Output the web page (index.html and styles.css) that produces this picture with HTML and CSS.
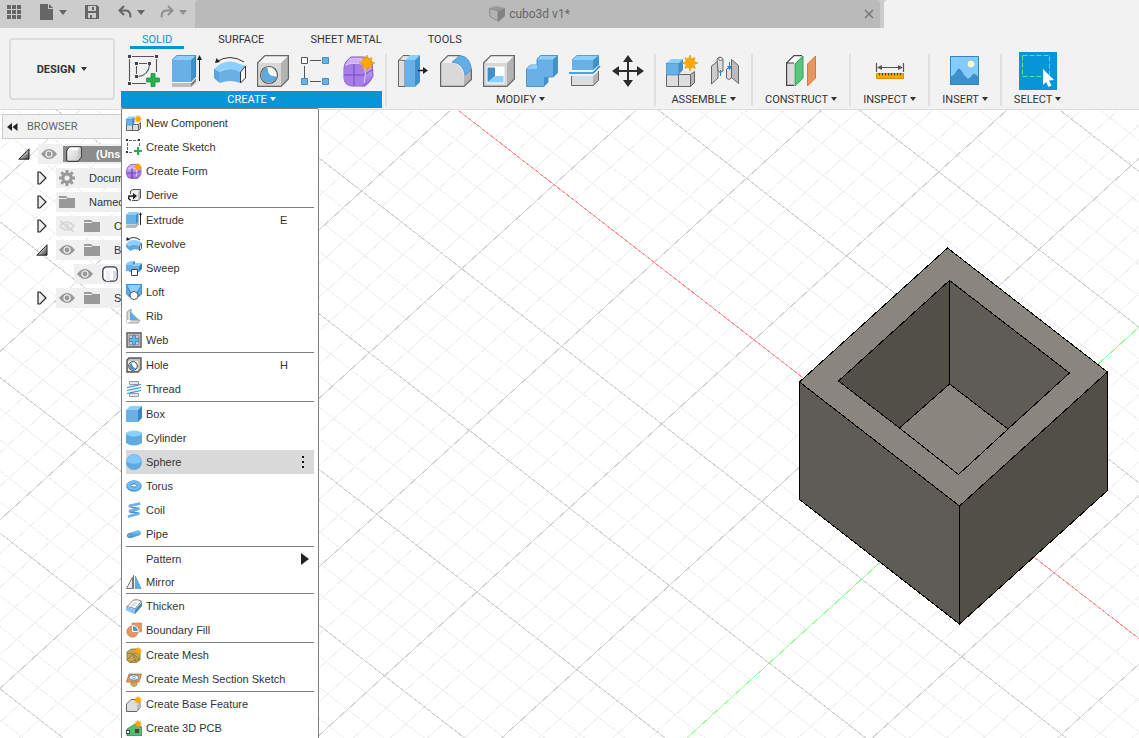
FILE: index.html
```html
<!DOCTYPE html>
<html lang="en">
<head>
<meta charset="utf-8">
<title>cubo3d v1*</title>
<link rel="stylesheet" href="styles.css">
</head>
<body>
<svg class="defs" aria-hidden="true">
  <linearGradient id="g-ball" x1="0" y1="0" x2="0" y2="1"><stop offset="0" stop-color="#d9b8ff"/><stop offset="1" stop-color="#9a6fe0"/></linearGradient>
  <linearGradient id="g-gray" x1="0" y1="0" x2="1" y2="1"><stop offset="0" stop-color="#ffffff"/><stop offset="1" stop-color="#c4c4c4"/></linearGradient>
  <linearGradient id="g-tri" x1="0" y1="0" x2="1" y2="1"><stop offset="0.3" stop-color="#eeeeee"/><stop offset="1" stop-color="#333333"/></linearGradient>
  <linearGradient id="g-pipe" x1="0" y1="0" x2="0" y2="1"><stop offset="0" stop-color="#8cccff"/><stop offset="1" stop-color="#3c8ccb"/></linearGradient>

  <symbol id="i-apps" viewBox="0 0 16 16"><path fill="#666" d="M1 1h4v4H1zM6 1h4v4H6zM11 1h4v4h-4zM1 6h4v4H1zM6 6h4v4H6zM11 6h4v4h-4zM1 11h4v4H1zM6 11h4v4H6zM11 11h4v4h-4z"/></symbol>
  <symbol id="i-file" viewBox="0 0 16 16"><path fill="#666" d="M1 0h8v5h5v11H1zM10 0l4 4h-4z"/></symbol>
  <symbol id="i-save" viewBox="0 0 16 16"><path fill="#666" fill-rule="evenodd" d="M1 1h12l2 2v12H1zM4 2v5h8V2zM4 9v5h8V9zM8 3h2v3H8zM6 11h2v3H6z"/></symbol>
  <symbol id="i-undo" viewBox="0 0 16 16"><path fill="none" stroke="#666" stroke-width="2" d="M7 2L2.500 6.500 7 11M3 6.500h6q4.500 0 4.500 7"/></symbol>
  <symbol id="i-redo" viewBox="0 0 16 16"><path fill="none" stroke="#8f8f8f" stroke-width="2" d="M9 2l4.500 4.500L9 11M13 6.500H7q-4.500 0-4.500 7"/></symbol>
  <symbol id="i-doc" viewBox="0 0 16 16"><path fill="#9a9a9a" d="M0 2l7-2 9 2-7 3z"/><path fill="#b4b4b4" stroke="#8c8c8c" d="M.5 2.500L9 5v10L1 10.500z"/><path fill="#828282" d="M9 5l7-3v8l-7 6z"/></symbol>
  <symbol id="i-x" viewBox="0 0 10 10"><path fill="none" stroke="#777" stroke-width="1.500" d="M1 1l8 8M9 1L1 9"/></symbol>

  <symbol id="i-star" viewBox="0 0 16 16"><path fill="#ffa800" stroke="#e89400" stroke-width=".6" d="M8 0l1.500 4L13 2.500 12 6.500l4 1.500-4 1.500 1.200 4L9.500 12 8 16l-1.500-4L3 13.500l1.200-4L0 8l4.200-1.500L3 2.500 6.500 4z"/></symbol>

  <symbol id="i-sketch" viewBox="0 0 32 32"><path stroke="#555" fill="none" stroke-width="1.100" d="M4 1.500h22M1.500 4v22M28.500 4v13M4 28.500h14M11 8.500h8M8.500 11v8M21.500 10q-1 10-11 11.500"/><path fill="#444" d="M0 0h3v3H0zM27 0h3v3h-3zM0 27h3v3H0zM7 7h3v3H7zM20 7h3v3h-3zM7 20h3v3H7z"/><path fill="#26b34b" stroke="#168c36" stroke-width=".7" d="M23 18.500h4V23h4.500v4H27v4.500h-4V27h-4.500v-4H23z"/></symbol>
  <symbol id="i-sketch-sm" viewBox="0 0 16 16"><path stroke="#666" fill="none" stroke-dasharray="3 1" d="M3 1.500h10M1.500 4v8M13.500 4v4M3 13.500h4"/><path fill="#333" d="M0 0h2v2H0zM12 0h2v2h-2zM0 12h2v2H0z"/><path fill="#20b14a" d="M11 8h2v3h3v2h-3v3h-2v-3H8v-2h3z"/></symbol>
  <symbol id="i-extrude" viewBox="0 0 32 32"><path fill="#bdbdbd" d="M1 28h19v4H1z"/><path fill="#858585" d="M20 28l5-5v4l-5 5z"/><path fill="#fff" d="M1 27h19l5-5v1l-5 5H1z"/><path fill="#69b0e6" d="M1 5h19v22H1z"/><path fill="#8bd0ff" d="M1 5l5-5h19l-5 5z"/><path fill="#438fca" d="M20 5l5-5v22l-5 5z"/><path fill="none" stroke="#2d7ab5" stroke-width=".7" d="M1 5l5-4.600h18.600V22"/><path stroke="#222" d="M28.500 4v22"/><path fill="#222" d="M28.500 0l2.500 5h-5z"/></symbol>
  <symbol id="i-extrude-sm" viewBox="0 0 16 16"><path fill="#bbb" stroke="#999" stroke-width=".6" d="M.5 13.500h9l3-3v2l-3 3h-9z"/><path fill="#69b0e6" d="M0 2h10v10.500H0z"/><path fill="#8bd0ff" d="M0 3l3-3h9.500L10 3z"/><path fill="#438fca" d="M10 3l2.500-3v9.500L10 12.500z"/><path stroke="#222" d="M14.500 2v11"/><path fill="#222" d="M14.500 0l1.500 3h-3z"/></symbol>
  <symbol id="i-revolve" viewBox="0 0 32 32"><path fill="none" stroke="#333" d="M2 7Q16-2 30 7"/><path fill="#222" d="M1 8l1.500-5L6 7z"/><path fill="#8bd0ff" d="M0 14l6-5q10-5 20 0l6 2-6 6q-11-6-20-1l-1 4z"/><path fill="#69b0e6" d="M0 14l5 3q11-6 21 0v11q-10-4-20 0l-6-5z"/><path fill="#438fca" d="M5 17v11l-5-5v-9z" opacity=".35"/><path fill="#f4f4f4" stroke="#333" d="M26.500 17l5-6v12l-5 5z"/></symbol>
  <symbol id="i-revolve-sm" viewBox="0 0 16 16"><path fill="none" stroke="#333" d="M1 4q7-5 13 0"/><path fill="#222" d="M0 4.500L1 1l3 3z"/><path fill="#8bd0ff" d="M0 8l3-3q5-2 10 0l3 2-3 3q-5-3-10 0z"/><path fill="#60aae2" d="M0 8l3 2q5-3 10 0v4q-5-2-9 1l-4-4z"/><path fill="#ddd" stroke="#444" stroke-width=".8" d="M13.500 10L15.500 7.500v5l-2 2z"/></symbol>
  <symbol id="i-hole" viewBox="0 0 32 32"><path fill="#f4f4f4" d="M.5 8L8 .500h23.500L24 8z"/><path fill="#b3b3b3" d="M24 8l7.500-7.500V24L24 31.500z"/><path fill="#d7d7d7" d="M.5 8H24v23.500H.5z"/><path fill="none" stroke="#666" stroke-width="1.200" d="M.5 8L8 .600h23.400V24L24 31.400H.6z"/><circle cx="12" cy="20" r="8.500" fill="#f7f7f7" stroke="#555" stroke-width="1.200"/><path fill="#60aae2" stroke="#347fb9" stroke-width=".6" d="M10 13a7.200 7.200 0 1 0 9 9q-9 0-9-9z"/></symbol>
  <symbol id="i-rect" viewBox="0 0 32 32"><path stroke="#555" d="M10 5.500h11M4.500 11v12M10 26.500h11"/><path fill="#fff" stroke="#555" d="M1.500 2.500h6v6h-6z"/><path fill="#69b0e6" stroke="#438fca" d="M22.500 2.500h6v6h-6zM1.500 23.500h6v6h-6zM22.500 23.500h6v6h-6z"/></symbol>
  <symbol id="i-form" viewBox="0 0 32 32"><path fill="url(#g-ball)" stroke="#8055c4" d="M1 14q0-7 7-12h12q6 0 9 5l1 14q-3 7-8 10H9q-8-1-8-8z"/><path fill="#a87de8" d="M1 14q1-4 6-5h11q4 1 4 5v12q-1 4-4 5H8q-7-2-7-7z"/><path fill="none" stroke="#724ab3" d="M1 20h20l8-5M11 9v22"/><path fill="none" stroke="#e2ccff" d="M3 10q5-3 16-1l5-3M21 10q3 8 0 18"/><use href="#i-star" x="16" y="0" width="16" height="16"/></symbol>
  <symbol id="i-form-sm" viewBox="0 0 16 16"><path fill="url(#g-ball)" stroke="#8055c4" stroke-width=".8" d="M.5 8q0-4 4-6.500h7q3 1 3.500 4v5q-1 4-4 5H5Q1 15 .5 11z"/><path fill="none" stroke="#6b3fb0" stroke-width="1.200" d="M1 10h10l3-2M6 5v10"/><path fill="none" stroke="#e2ccff" d="M2 6q4-2 8-.5 2 4 0 8"/><use href="#i-star" x="8" y="0" width="8" height="8"/></symbol>

  <symbol id="i-press" viewBox="0 0 32 32"><path fill="#eee" d="M1 5l5-4.500h9L10 5z"/><path fill="#ddd" stroke="#666" d="M1.500 5.500L6 .500h8M1.500 5v26.500H8V5.500z"/><path fill="#69b0e6" d="M8 5h10v27H8z"/><path fill="#8bd0ff" d="M8 5l5-5h10l-5 5z"/><path fill="#438fca" d="M18 5l5-5v27l-5 5z"/><path stroke="#222" stroke-width="1.500" d="M21 15.500h6"/><path fill="#222" d="M26 12l5 3.500-5 3.500z"/></symbol>
  <symbol id="i-fillet" viewBox="0 0 32 32"><path fill="#f2f2f2" d="M.5 8L8 .500h12L13 8z"/><path fill="#d9d9d9" d="M.5 8H13q11 3 11 16v7.500H.5z"/><path fill="#b5b5b5" d="M24 20l7.500-7v11L24 31.500z"/><path fill="none" stroke="#666" stroke-width="1.200" d="M20 .600H8L.6 8v23.400H24l7.400-7V14"/><path fill="#64ade5" stroke="#3c87c2" stroke-width=".7" d="M12 7l8-6.500q10 1 11.500 14L25 20Q23 8 12 7z"/></symbol>
  <symbol id="i-shell" viewBox="0 0 32 32"><path fill="#f4f4f4" d="M.5 8L8 .500h23.500L24 8z"/><path fill="#b3b3b3" d="M24 8l7.500-7.500V24L24 31.500z"/><path fill="#d7d7d7" d="M.5 8H24v23.500H.5z"/><path fill="none" stroke="#666" stroke-width="1.200" d="M.5 8L8 .600h23.400V24L24 31.400H.6z"/><path fill="#f7f7f7" d="M4 12h17v16H4z"/><path fill="#438fca" d="M4 12h8v9l-8 7z"/><path fill="#8bd0ff" d="M4 28l8-7h9v7z"/><path fill="#fff" d="M12 12h9v9h-9z"/><path fill="none" stroke="#fff" d="M4 12h17v16H4z"/></symbol>
  <symbol id="i-combine" viewBox="0 0 32 32"><path fill="#69b0e6" stroke="#3983bd" stroke-width=".8" d="M.5 14l4-4H11V4L14.500.500h17V18L27 22h-5v5l-4 4.500H.5z"/><path fill="#8bd0ff" d="M1 14l4-4h6v4zM11 4.500L14.500 1H31l-4 3.500z"/><path fill="#438fca" d="M27 4.500L31 1v17l-4 4zM18 22h4v5l-4 4z"/></symbol>
  <symbol id="i-split" viewBox="0 0 32 32"><path fill="#69b0e6" d="M3 5h21v10H3z"/><path fill="#8bd0ff" d="M3 5l5-5h22l-6 5z"/><path fill="#438fca" d="M24 5l6-5v10l-6 5z"/><path fill="none" stroke="#3983bd" stroke-width=".7" d="M3 5l5-4.600h21.600"/><path fill="none" stroke="#1789db" stroke-width="1.500" d="M0 18h24l7-7"/><path fill="#ddd" d="M3 21h21v10H3z"/><path fill="#b5b5b5" d="M24 21l6-5v9l-6 6z"/><path fill="none" stroke="#666" d="M2.500 21v9.500H24l5.500-5V16"/></symbol>
  <symbol id="i-move" viewBox="0 0 32 32"><path fill="#2c2c2c" d="M16 0l5 7h-4v8h8v-4l7 5-7 5v-4h-8v8h4l-5 7-5-7h4v-8H7v4l-7-5 7-5v4h8V7h-4z"/></symbol>
  <symbol id="i-component" viewBox="0 0 32 32"><path fill="#e9e9e9" d="M1 20l4-4h23l-4 4z"/><path fill="#ddd" stroke="#666" d="M.5 19.500h12v12H.5zM12.500 19.500h12v12h-12z"/><path fill="#b3b3b3" stroke="#666" d="M24.500 19.500l4-3v11l-4 4z"/><path fill="#69b0e6" stroke="#3c87c2" stroke-width=".7" d="M.5 8h12v12H.5z"/><path fill="#8bd0ff" d="M1 8l4-4h12l-4 4z"/><path fill="#438fca" d="M13 8l4-4v11l-4 4z"/><use href="#i-star" x="16" y="0" width="16" height="16"/></symbol>
  <symbol id="i-component-sm" viewBox="0 0 16 16"><path fill="#ddd" stroke="#666" d="M.5 9.500h6v6h-6zM6.500 9.500h6v6h-6z"/><path fill="#bbb" stroke="#666" d="M12.500 9.500l2-2v6l-2 2z"/><path fill="#69b0e6" stroke="#3c87c2" stroke-width=".7" d="M.5 4h6v6h-6z"/><path fill="#8bd0ff" d="M.5 4l2-2.500h6L6.500 4z"/><path fill="#3c87c2" d="M6.500 4l2-2.500V8l-2 2z"/><use href="#i-star" x="8" y="0" width="8" height="8"/></symbol>
  <symbol id="i-joint" viewBox="0 0 32 32"><path fill="#ccc" stroke="#666" d="M2.500 11L9 6v17l-6.500 6z"/><path fill="#ddd" stroke="#666" d="M8 4q3-4 6 0v12q-3 3-5 0z"/><ellipse cx="11.500" cy="4" rx="2" ry="1.500" fill="#fff" stroke="#777"/><path fill="#bbb" stroke="#666" d="M22.500 4.500l7 6v18l-7-6z"/><path fill="#ddd" stroke="#666" d="M17.500 14q3-3 5 0v9q-3 3-5 0z"/><path stroke="#1789db" d="M11.500 15v6M20.500 7v7"/><path fill="#1789db" d="M18 11h5l-2.500 4z"/></symbol>
  <symbol id="i-plane" viewBox="0 0 32 32"><path fill="#fff" d="M1 8l8-7.500h7L10 8z"/><path fill="#dcdcdc" d="M1 8h8v22H1z"/><path fill="none" stroke="#444" stroke-width="1.200" d="M17 .600H9L1.600 8v22.400H9M1 8h8"/><path fill="#5dc47f" stroke="#2ea55a" d="M10 9l8-8v22l-8 8z"/><path fill="#e8965f" stroke="#cf7a40" d="M22.500 9l8-8v22l-8 8z"/></symbol>
  <symbol id="i-ruler" viewBox="0 0 32 32"><path stroke="#555" stroke-width="1.200" d="M2.500 8v9M29.500 8v9M4 12.500h24"/><path fill="#555" d="M3 12.500L8 10v5zM29 12.500L24 10v5z"/><path fill="#ffa800" stroke="#d98c00" d="M2.500 18.500h27v5h-27z"/><path stroke="#444" d="M5.500 18v2.500M8.500 18v2.500M11.500 18v2.500M14.500 18v2.500M17.500 18v2.500M20.500 18v2.500M23.500 18v2.500M26.500 18v2.500"/></symbol>
  <symbol id="i-image" viewBox="0 0 32 32"><path fill="#82ccff" d="M1 1h29v29H1z"/><circle cx="22" cy="9" r="3.300" fill="#fffbc7"/><path fill="#3e8fca" d="M1 22q5-2 7-7 2-3 4 0 3 6 7 9 3-2 5-5 2-1 6 4v7H1z"/><path fill="none" stroke="#3484bf" d="M1.500 1.500h28v28h-28z"/></symbol>
  <symbol id="i-select" viewBox="0 0 38 38"><path fill="none" stroke="#5fe08a" stroke-dasharray="5 2" d="M3.500 3.500h27v21h-27z"/><path fill="#fff" d="M24 17l11 11-5 .500 2.500 5-3 1.500-2.500-5-3 3z"/></symbol>

  <symbol id="i-derive" viewBox="0 0 16 16"><path fill="#eee" stroke="#555" d="M4.500 7V4L7 2.500h7.500V11L12 13.500H6"/><path fill="#bbb" d="M12 5l2-2v8l-2 2z"/><path fill="none" stroke="#222" stroke-width="1.600" d="M5 13q-3 0-2-4h5"/><path fill="#222" d="M7 6l4 3-4 3.500z"/></symbol>
  <symbol id="i-sweep" viewBox="0 0 16 16"><path fill="#69b0e6" d="M0 5h6l2 1h5v6H3v-1H0z"/><path fill="#8bd0ff" d="M0 5q0-3 5-4h4v2h7l-3 3H8Q7 4 5 5z"/><path fill="#3983bd" d="M13 6l3-3v6l-3 3zM6 4l3-3v2L7 5z"/><path fill="#fff" stroke="#444" d="M5.500 9.500h6v6h-6z"/></symbol>
  <symbol id="i-loft" viewBox="0 0 16 16"><path fill="#438fca" d="M0 0h16v10l-3 3H3L0 10z"/><path fill="#8bd0ff" d="M1 1h14l-4 7H5z"/><path fill="#60aae2" d="M0 2l5 8-4 1zM16 2l-5 8 4 1z"/><circle cx="8" cy="11.500" r="4" fill="#fff" stroke="#555"/></symbol>
  <symbol id="i-rib" viewBox="0 0 16 16"><path fill="#ddd" stroke="#888" stroke-width=".8" d="M1 4l4-3v11h9l-2 3H1z"/><path fill="#60aae2" d="M4 3l9 9H4z"/><path fill="#fff" d="M1 12h4l-3 3H1z"/></symbol>
  <symbol id="i-web" viewBox="0 0 16 16"><path fill="#e4e4e4" stroke="#555" stroke-width="1.400" d="M1 1h14v14H1z"/><path fill="#ccc" stroke="#666" stroke-width=".8" d="M3 3h10v10H3z"/><path fill="#438fca" d="M6 3h4v3h3v4h-3v3H6v-3H3V6h3z"/><path fill="#69b4ec" d="M7 4h2v3h3v2H9v3H7V9H4V7h3z"/></symbol>
  <symbol id="i-hole-sm" viewBox="0 0 16 16"><path fill="#c4c4c4" stroke="#555" stroke-width="1.400" d="M1 3l2-2h12v11l-3 3H1z"/><path fill="#e5e5e5" d="M2 4h10v10H2z"/><circle cx="7" cy="9" r="4.300" fill="#fff" stroke="#444"/><path fill="#438fca" d="M6 6a3.500 3.500 0 1 0 4 5q-4 0-4-5z"/></symbol>
  <symbol id="i-thread" viewBox="0 0 16 16"><path fill="#e8e8e8" stroke="#999" d="M3.500.500h9v3h-9zM3.500 12.500h9v3h-9z"/><path fill="#eee" d="M4 4h8v8H4z"/><path stroke="#2291df" stroke-width="1.200" d="M1 6.500l14-3M1 9.500l14-3M1 12.500l14-3"/></symbol>
  <symbol id="i-box" viewBox="0 0 16 16"><path fill="#69b0e6" d="M0 4h12v12H0z"/><path fill="#8bd0ff" d="M0 4l4-4h12l-4 4z"/><path fill="#3c87c2" d="M12 4l4-4v12l-4 4z"/></symbol>
  <symbol id="i-cylinder" viewBox="0 0 16 16"><path fill="#60aae2" d="M0 3v10q8 5 16 0V3z"/><ellipse cx="8" cy="3.500" rx="8" ry="3" fill="#8bd0ff"/></symbol>
  <symbol id="i-sphere" viewBox="0 0 16 16"><circle cx="8" cy="8" r="7.800" fill="#82c8fb"/><path fill="#60aae2" d="M.2 8q8 3.500 15.600 0A7.800 7.800 0 0 1 .2 8z"/><circle cx="8" cy="8" r="7.500" fill="none" stroke="#60aae2" stroke-width=".6"/></symbol>
  <symbol id="i-torus" viewBox="0 0 16 16"><ellipse cx="8" cy="8" rx="7.800" ry="5.700" fill="#4795d0"/><ellipse cx="8" cy="7.500" rx="7" ry="4.800" fill="#72bbf0"/><ellipse cx="8" cy="7.500" rx="3" ry="1.600" fill="#fff" stroke="#3c87c2"/></symbol>
  <symbol id="i-coil" viewBox="0 0 16 16"><path fill="none" stroke="#438fca" stroke-width="2" stroke-linejoin="bevel" d="M14 1.500L3 4l10 3L3 9.500l10 2L2 14.500"/><path stroke="#69b4ec" stroke-width="2.600" d="M14 1.500L3 4M13.500 6.500L3 9M13.500 11.500L2 14.500"/></symbol>
  <symbol id="i-pipe" viewBox="0 0 16 16"><path fill="url(#g-pipe)" d="M3 7l9-3q3 0 3 3 0 2-2 2.500L5 12q-4 0-4-2.500Q1 8 3 7z"/><ellipse cx="3.500" cy="9.500" rx="2" ry="1.800" fill="#69b0e6" stroke="#3779aa" stroke-width=".7"/></symbol>
  <symbol id="i-mirror" viewBox="0 0 16 16"><path fill="#eee" stroke="#777" d="M6.500 3v11.500h-6z"/><path fill="#60aae2" stroke="#3c87c2" stroke-width=".6" d="M9.300 2v12.600H15z"/><path stroke="#777" d="M7.500 1v14"/></symbol>
  <symbol id="i-thicken" viewBox="0 0 16 16"><path fill="#3c87c2" d="M0 9l9 3 7-8v4l-7 8-9-4z"/><path fill="#82c8fb" d="M0 9l9 3v4l-9-4z"/><path fill="#fafafa" stroke="#666" stroke-width=".8" d="M1 8.500L7.500 2q4-1 8 1L9 11q-4-2-8-2.500z"/><path fill="#ddd" d="M4 8l4-4 4 .500-4 4z"/></symbol>
  <symbol id="i-boundary" viewBox="0 0 16 16"><path fill="#e8965f" stroke="#c57847" stroke-width=".6" d="M6 1h9.500v9H12V4.500H6z"/><circle cx="6.500" cy="9.500" r="5.500" fill="#e8965f" stroke="#d2824e"/><path fill="#4c9cdb" stroke="#fff" d="M6.500 3.500v6h6a6 6 0 0 0-6-6z"/></symbol>
  <symbol id="i-mesh" viewBox="0 0 16 16"><path fill="#c3a557" stroke="#806727" stroke-width=".7" d="M1 5l4-3h8l1 3v8l-4 3H4l-3-3z"/><path fill="none" stroke="#866c2a" stroke-width=".7" d="M1 6l6 1 7-2M1 13l6-6 3 8M8 8l6 4-10 3"/><use href="#i-star" x="8" y="0" width="8" height="8"/></symbol>
  <symbol id="i-section" viewBox="0 0 16 16"><path fill="#c8ac5d" stroke="#927830" stroke-width=".6" d="M5 10h6v4l-3 2-3-2z"/><path fill="#e8965f" stroke="#bd6c37" stroke-width=".8" d="M3 3h12.500L13 11H.5z"/><ellipse cx="8" cy="6.500" rx="4.500" ry="2.600" fill="#fff" stroke="#2291df"/><ellipse cx="8" cy="6.500" rx="2" ry="1" fill="#fff" stroke="#777" stroke-width=".6"/></symbol>
  <symbol id="i-base" viewBox="0 0 16 16"><path fill="#ddd" stroke="#666" d="M.5 8L5 3.500h7q2 1 2 4v4L11 15.500H.5z"/><path fill="#bbb" d="M11 9l3-2v4.500L11 15z"/><use href="#i-star" x="8" y="0" width="8" height="8"/></symbol>
  <symbol id="i-pcb" viewBox="0 0 16 16"><path fill="#4fbd72" stroke="#248347" stroke-width=".7" d="M1 9l8-5 7 3v9H1z"/><path fill="#444" d="M0 10h4v4H0zM9 9h4v4H9z"/><path fill="#fff" d="M1 11h2v2H1z"/><use href="#i-star" x="8" y="0" width="8" height="8"/></symbol>

  <symbol id="i-rewind" viewBox="0 0 11 8"><path fill="#222" d="M5 0v8L0 4zM10.500 0v8l-5-4z"/></symbol>
  <symbol id="i-open" viewBox="0 0 12 12"><path fill="url(#g-tri)" stroke="#222" d="M11 .800v10.400H.800z"/></symbol>
  <symbol id="i-closed" viewBox="0 0 12 14"><path fill="#eee" stroke="#222" stroke-width="1.200" d="M2 1v12h2l6-6-6-6z"/></symbol>
  <symbol id="i-eye" viewBox="0 0 16 16"><path fill="#999" fill-rule="evenodd" d="M0 8q8-10 16 0-8 10-16 0zM8 4.300a3.700 3.700 0 1 0 .01 0z"/><circle cx="8" cy="8" r="2.400" fill="#999"/></symbol>
  <symbol id="i-eye-off" viewBox="0 0 16 16"><path fill="none" stroke="#dadada" stroke-width="2" d="M1 8q7-8 14 0-7 8-14 0z"/><path stroke="#cfcfcf" stroke-width="1.500" d="M1 3l14 11"/><circle cx="8" cy="8" r="2.400" fill="#dadada"/></symbol>
  <symbol id="i-folder" viewBox="0 0 16 16"><path fill="#999" d="M0 2h7l2 2h7v10H0z"/><path stroke="#f0f0f0" d="M0 4.500h8"/></symbol>
  <symbol id="i-gear" viewBox="0 0 16 16"><circle cx="8" cy="8" r="4.200" fill="none" stroke="#999" stroke-width="3.200"/><path stroke="#999" stroke-width="3" d="M8 0v3M8 13v3M0 8h3M13 8h3M2.300 2.300l2 2M11.700 11.700l2 2M2.300 13.700l2-2M11.700 4.300l2-2"/></symbol>
  <symbol id="i-part" viewBox="0 0 16 16"><path fill="url(#g-gray)" stroke="#2c2c2c" d="M.700 5q0-1 1-2l2-2.200h11.600V11L12 15.300H2q-1.300 0-1.300-1.300z"/><path fill="#fff" d="M2 4l2.500-2.500h9L11 4z"/><path fill="#c5c8cc" d="M12 5l2.700-3v9L12 14z"/></symbol>
  <symbol id="i-body" viewBox="0 0 16 16"><rect x=".8" y=".8" width="14.400" height="14.400" rx="4" fill="#fff" stroke="#333a4a" stroke-width="1.300"/><path fill="#d7dae2" d="M11 5h3.500v7l-3.500 2.500z"/><path fill="#eceef2" d="M4 5h4v10H4z"/></symbol>
</svg>

<div class="app">
  <header class="titlebar">
    <nav class="quick" aria-label="Quick access">
      <button class="quick-btn" aria-label="Data panel"><svg class="ic16"><use href="#i-apps"/></svg></button>
      <button class="quick-btn" aria-label="File"><svg class="ic16"><use href="#i-file"/></svg><span class="caret"></span></button>
      <button class="quick-btn" aria-label="Save"><svg class="ic16"><use href="#i-save"/></svg></button>
      <button class="quick-btn" aria-label="Undo"><svg class="ic16"><use href="#i-undo"/></svg><span class="caret"></span></button>
      <button class="quick-btn dim" aria-label="Redo"><svg class="ic16"><use href="#i-redo"/></svg><span class="caret"></span></button>
    </nav>
    <div class="doc-tab">
      <div class="doc-name"><svg class="ic16"><use href="#i-doc"/></svg><span>cubo3d v1*</span></div>
      <button class="close" aria-label="Close document"><svg class="ic10"><use href="#i-x"/></svg></button>
    </div>
    <div class="tab-rest"></div>
  </header>

  <section class="ribbon">
    <button class="workspace">DESIGN<span class="caret"></span></button>
    <div class="ribbon-main">
      <nav class="tabs" aria-label="Ribbon tabs">
        <button class="tab active">SOLID</button>
        <button class="tab">SURFACE</button>
        <button class="tab">SHEET METAL</button>
        <button class="tab">TOOLS</button>
      </nav>
      <div class="groups">
        <div class="group create">
          <div class="tools">
            <button class="tool" aria-label="Create Sketch"><svg><use href="#i-sketch"/></svg></button>
            <button class="tool" aria-label="Extrude"><svg><use href="#i-extrude"/></svg></button>
            <button class="tool" aria-label="Revolve"><svg><use href="#i-revolve"/></svg></button>
            <button class="tool" aria-label="Hole"><svg><use href="#i-hole"/></svg></button>
            <button class="tool" aria-label="Rectangular Pattern"><svg><use href="#i-rect"/></svg></button>
            <button class="tool" aria-label="Create Form"><svg><use href="#i-form"/></svg></button>
          </div>
          <button class="group-label" aria-expanded="true">CREATE<span class="caret"></span></button>
          <div class="menu" role="menu">
            <button class="item" role="menuitem"><svg class="ic16"><use href="#i-component-sm"/></svg>New Component</button>
            <button class="item" role="menuitem"><svg class="ic16"><use href="#i-sketch-sm"/></svg>Create Sketch</button>
            <button class="item" role="menuitem"><svg class="ic16"><use href="#i-form-sm"/></svg>Create Form</button>
            <button class="item" role="menuitem"><svg class="ic16"><use href="#i-derive"/></svg>Derive</button>
            <hr>
            <button class="item" role="menuitem"><svg class="ic16"><use href="#i-extrude-sm"/></svg>Extrude<kbd>E</kbd></button>
            <button class="item" role="menuitem"><svg class="ic16"><use href="#i-revolve-sm"/></svg>Revolve</button>
            <button class="item" role="menuitem"><svg class="ic16"><use href="#i-sweep"/></svg>Sweep</button>
            <button class="item" role="menuitem"><svg class="ic16"><use href="#i-loft"/></svg>Loft</button>
            <button class="item" role="menuitem"><svg class="ic16"><use href="#i-rib"/></svg>Rib</button>
            <button class="item" role="menuitem"><svg class="ic16"><use href="#i-web"/></svg>Web</button>
            <hr>
            <button class="item" role="menuitem"><svg class="ic16"><use href="#i-hole-sm"/></svg>Hole<kbd>H</kbd></button>
            <button class="item" role="menuitem"><svg class="ic16"><use href="#i-thread"/></svg>Thread</button>
            <hr>
            <button class="item" role="menuitem"><svg class="ic16"><use href="#i-box"/></svg>Box</button>
            <button class="item" role="menuitem"><svg class="ic16"><use href="#i-cylinder"/></svg>Cylinder</button>
            <button class="item hover" role="menuitem"><svg class="ic16"><use href="#i-sphere"/></svg>Sphere<span class="dots"><i></i><i></i><i></i></span></button>
            <button class="item" role="menuitem"><svg class="ic16"><use href="#i-torus"/></svg>Torus</button>
            <button class="item" role="menuitem"><svg class="ic16"><use href="#i-coil"/></svg>Coil</button>
            <button class="item" role="menuitem"><svg class="ic16"><use href="#i-pipe"/></svg>Pipe</button>
            <hr>
            <button class="item short" role="menuitem" aria-haspopup="true"><svg class="ic16"></svg>Pattern<span class="submenu"></span></button>
            <button class="item short" role="menuitem"><svg class="ic16"><use href="#i-mirror"/></svg>Mirror</button>
            <hr>
            <button class="item" role="menuitem"><svg class="ic16"><use href="#i-thicken"/></svg>Thicken</button>
            <button class="item" role="menuitem"><svg class="ic16"><use href="#i-boundary"/></svg>Boundary Fill</button>
            <hr>
            <button class="item" role="menuitem"><svg class="ic16"><use href="#i-mesh"/></svg>Create Mesh</button>
            <button class="item" role="menuitem"><svg class="ic16"><use href="#i-section"/></svg>Create Mesh Section Sketch</button>
            <hr>
            <button class="item" role="menuitem"><svg class="ic16"><use href="#i-base"/></svg>Create Base Feature</button>
            <button class="item" role="menuitem"><svg class="ic16"><use href="#i-pcb"/></svg>Create 3D PCB</button>
          </div>
        </div>
        <div class="group">
          <div class="tools">
            <button class="tool" aria-label="Press Pull"><svg><use href="#i-press"/></svg></button>
            <button class="tool" aria-label="Fillet"><svg><use href="#i-fillet"/></svg></button>
            <button class="tool" aria-label="Shell"><svg><use href="#i-shell"/></svg></button>
            <button class="tool" aria-label="Combine"><svg><use href="#i-combine"/></svg></button>
            <button class="tool" aria-label="Split Body"><svg><use href="#i-split"/></svg></button>
            <button class="tool" aria-label="Move"><svg><use href="#i-move"/></svg></button>
          </div>
          <button class="group-label">MODIFY<span class="caret"></span></button>
        </div>
        <div class="group">
          <div class="tools">
            <button class="tool" aria-label="Add Component"><svg><use href="#i-component"/></svg></button>
            <button class="tool" aria-label="Joint"><svg><use href="#i-joint"/></svg></button>
          </div>
          <button class="group-label">ASSEMBLE<span class="caret"></span></button>
        </div>
        <div class="group">
          <div class="tools"><button class="tool" aria-label="Offset Plane"><svg><use href="#i-plane"/></svg></button></div>
          <button class="group-label">CONSTRUCT<span class="caret"></span></button>
        </div>
        <div class="group">
          <div class="tools"><button class="tool" aria-label="Measure"><svg><use href="#i-ruler"/></svg></button></div>
          <button class="group-label">INSPECT<span class="caret"></span></button>
        </div>
        <div class="group">
          <div class="tools"><button class="tool" aria-label="Insert Image"><svg><use href="#i-image"/></svg></button></div>
          <button class="group-label">INSERT<span class="caret"></span></button>
        </div>
        <div class="group">
          <div class="tools"><button class="tool select" aria-label="Select"><svg><use href="#i-select"/></svg></button></div>
          <button class="group-label">SELECT<span class="caret"></span></button>
        </div>
      </div>
    </div>
  </section>

  <main class="viewport">
    <svg class="scene" role="img" aria-label="Hollow cube on a construction grid">
      <g transform="translate(0 -110)">
        <g id="grid" transform="matrix(20 15.520 18.480 -16.800 461.700 268.700)"></g>
        <g class="edges">
          <path class="face-top" d="M947.500 248L1107.500 372 959.500 506 799.500 382z"/>
          <path class="face-left" d="M799.500 382l160 124v118l-160-124.500z"/>
          <path class="face-right" d="M959.500 506l148-134v118.500l-148 133.500z"/>
          <path class="face-right" d="M949.500 280.500v103.500l-50 44-61-47z"/>
          <path class="face-left" d="M949.500 280.500l120 92.500-61.500 56-58.500-45z"/>
          <path class="face-top" d="M949.500 384l58.500 45-49.500 45.500-59-46.500z"/>
        </g>
      </g>
    </svg>
    <aside class="browser">
      <button class="browser-head"><svg class="rewind"><use href="#i-rewind"/></svg>BROWSER</button>
      <ul class="tree">
        <li class="row"><svg class="twist"><use href="#i-open"/></svg><div class="cell root"><svg class="ic16"><use href="#i-eye"/></svg><span class="picked"><svg class="ic16"><use href="#i-part"/></svg><b>(Uns</b></span></div></li>
        <li class="row l2"><svg class="twist tall"><use href="#i-closed"/></svg><div class="cell"><svg class="ic16"><use href="#i-gear"/></svg><span>Docum</span></div></li>
        <li class="row l2"><svg class="twist tall"><use href="#i-closed"/></svg><div class="cell"><svg class="ic16"><use href="#i-folder"/></svg><span>Named</span></div></li>
        <li class="row l2"><svg class="twist tall"><use href="#i-closed"/></svg><div class="cell"><svg class="ic16"><use href="#i-eye-off"/></svg><svg class="ic16"><use href="#i-folder"/></svg><span>O</span></div></li>
        <li class="row l2"><svg class="twist"><use href="#i-open"/></svg><div class="cell"><svg class="ic16"><use href="#i-eye"/></svg><svg class="ic16"><use href="#i-folder"/></svg><span>B</span></div></li>
        <li class="row l3"><svg class="twist"></svg><div class="cell"><svg class="ic16"><use href="#i-eye"/></svg><svg class="ic16"><use href="#i-body"/></svg></div></li>
        <li class="row l2"><svg class="twist tall"><use href="#i-closed"/></svg><div class="cell"><svg class="ic16"><use href="#i-eye"/></svg><svg class="ic16"><use href="#i-folder"/></svg><span>S</span></div></li>
      </ul>
    </aside>
  </main>
</div>
<script src="grid.js"></script>
</body>
</html>
```

FILE: styles.css
```css
* { box-sizing: border-box; }

:root {
  --bar: #f2f2f2;
  --line: #dddddd;
  --ink: #333333;
  --accent: #0696d7;
}

body {
  margin: 0;
  overflow: hidden;
  color: var(--ink);
  font: 11px/16px Roboto, "Liberation Sans", sans-serif;
}

button {
  margin: 0;
  padding: 0;
  border: 0;
  background: none;
  color: inherit;
  font: inherit;
  cursor: pointer;
}

svg { display: block; flex: none; }
.defs { position: absolute; width: 0; height: 0; }
.ic16 { width: 16px; height: 16px; }
.ic10 { width: 10px; height: 10px; }

.caret {
  display: inline-block;
  flex: none;
  margin-bottom: 2px;
  border: solid transparent;
  border-width: 4px 3px 0;
  border-top-color: currentColor;
}

.app { display: flex; flex-direction: column; height: 100vh; }

/* Title bar */
.titlebar { display: flex; height: 28px; background: #cccccc; }
.quick { display: flex; align-items: center; gap: 17px; width: 195px; padding: 0 6px 4px; color: #666666; }
.quick-btn { display: flex; align-items: center; gap: 4px; }
.quick-btn .caret { margin: 0; border-width: 5px 4px 0; }
.quick-btn.dim { margin-left: -3px; color: #8f8f8f; }
.doc-tab { display: flex; flex: 685; align-items: center; border-radius: 4px 4px 0 0; background: #bababa; color: #666666; }
.doc-name { display: flex; flex: 1; align-items: center; justify-content: center; gap: 4px; font-size: 12px; }
.close { margin-right: 6px; }
.tab-rest { flex: 255; margin-left: 4px; border-radius: 4px 0 0 0; background: var(--bar); }

/* Ribbon */
.ribbon {
  display: flex;
  position: relative;
  z-index: 2;
  height: 82px;
  border-bottom: 1px solid var(--line);
  background: var(--bar);
}
.workspace {
  display: flex;
  flex: none;
  align-items: center;
  justify-content: center;
  gap: 6px;
  width: 106px;
  height: 62px;
  margin: 10px 6px 0 9px;
  padding-top: 1px;
  border: 2px solid var(--line);
  border-radius: 4px;
  font-weight: 700;
}
.ribbon-main { display: flex; flex-direction: column; }
.tabs { display: flex; gap: 22px; padding-left: 9px; }
.tab { height: 21px; padding: 4px 12px 0; border-bottom: 3px solid transparent; }
.tab.active { border-color: var(--accent); color: var(--accent); }

.groups { display: flex; height: 60px; }
.group {
  position: relative;
  display: flex;
  flex-direction: column;
  align-items: center;
  padding: 0 10px;
}
.group::before {
  content: "";
  position: absolute;
  left: -2px;
  top: 5px;
  width: 2px;
  height: 52px;
  background: #e0e0e0;
}
.group + .group { margin-left: 2px; }
.group.create { padding: 0 7px; margin-right: 3px; }
.group.create::before { content: none; }
.tools { display: flex; align-items: center; gap: 11px; height: 42px; padding-top: 2px; }
.tool { width: 32px; height: 32px; }
.tool svg { width: 100%; height: 100%; }
.tool.select { width: 38px; height: 38px; background: var(--accent); }
.group-label { display: flex; align-items: center; gap: 3px; height: 17px; padding: 1px 2px 0; }
.create .group-label { align-self: stretch; justify-content: center; margin: 0 -7px; background: var(--accent); color: #ffffff; }

/* Create menu */
.menu {
  position: absolute;
  left: 0;
  top: 100%;
  z-index: 5;
  width: 198px;
  margin-top: -1px;
  padding: 2px 4px;
  border: 1px solid #7f7f7f;
  border-radius: 2px;
  background: #ffffff;
  font-family: "Liberation Sans", Arial, sans-serif;
}
.item { display: flex; align-items: center; gap: 4px; width: 100%; height: 24px; text-align: left; white-space: nowrap; }
.item.short { height: 23px; }
.item.hover { background: #d9d9d9; }
.item kbd { width: 34px; margin-left: auto; font: inherit; }
.menu hr { height: 1px; margin: 0; border: 0; background: #7f7f7f; }
.dots { display: flex; flex-direction: column; gap: 3px; margin: 0 10px 0 auto; }
.dots i { width: 2px; height: 2px; background: #111111; }
.submenu { margin: 0 5px 0 auto; border: solid transparent; border-width: 6px 0 6px 8px; border-left-color: #222222; }

/* Canvas */
.viewport { position: relative; flex: 1; min-height: 0; overflow: hidden; background: #ffffff; }
.scene { position: absolute; inset: 0; width: 100%; height: 100%; }
.scene path { vector-effect: non-scaling-stroke; shape-rendering: crispEdges; }
.grid-minor { fill: none; stroke: #f0f0f0; }
.grid-major { fill: none; stroke: #d2d2d2; }
.axis-x { fill: none; stroke: #ff9696; }
.axis-y { fill: none; stroke: #96ff96; }
.edges path { stroke: #000000; stroke-linejoin: round; }
.face-top { fill: #8a857d; }
.face-left { fill: #5d5c56; }
.face-right { fill: #524f47; }

/* Browser tree */
.browser { position: relative; width: 124px; padding: 4px 0 0 2px; font-family: "Liberation Sans", Arial, sans-serif; }
.browser-head {
  display: flex;
  align-items: center;
  gap: 9px;
  width: 100%;
  height: 25px;
  padding: 0 4px;
  border: 1px solid #cccccc;
  background: var(--bar);
  color: #666666;
  font-family: Roboto, sans-serif;
}
.rewind { width: 11px; height: 8px; }
.tree { margin: 3px 0 0; padding: 0; list-style: none; }
.row { display: flex; align-items: center; gap: 8px; height: 24px; padding-left: 16px; }
.row.l2 { padding-left: 34px; }
.row.l3 { padding-left: 52px; }
.twist { width: 12px; height: 12px; }
.twist.tall { height: 14px; }
.cell { display: flex; flex: 1; align-items: center; gap: 9px; height: 20px; padding-left: 3px; background: #f0f0f0; white-space: nowrap; }
.cell span { padding-left: 5px; }
.cell.root { gap: 6px; }
.cell .picked { display: flex; flex: 1; align-items: center; gap: 14px; height: 16px; padding-left: 3px; background: #8c8c8c; color: #ffffff; }
```

FILE: grid.js
```js
// Construction grid: one unit is a minor square, every fifth line is major.
const SVG_NS = "http://www.w3.org/2000/svg";
const grid = document.getElementById("grid");
const EXTENT = 75;
const AXIS_X = 5;
const AXIS_Y = 20;

function addPath(name, d) {
  const path = document.createElementNS(SVG_NS, "path");
  path.setAttribute("class", name);
  path.setAttribute("d", d);
  grid.appendChild(path);
}

const along = (n) => `M${-EXTENT} ${n}H${EXTENT}`;
const across = (n) => `M${n} ${-EXTENT}V${EXTENT}`;

let minor = "";
let major = "";
for (let n = -EXTENT; n <= EXTENT; n++) {
  if (n % 5 === 0) major += along(n) + across(n);
  else minor += along(n) + across(n);
}

addPath("grid-minor", minor);
addPath("grid-major", major);
addPath("axis-x", along(AXIS_X));
addPath("axis-y", across(AXIS_Y));
```
